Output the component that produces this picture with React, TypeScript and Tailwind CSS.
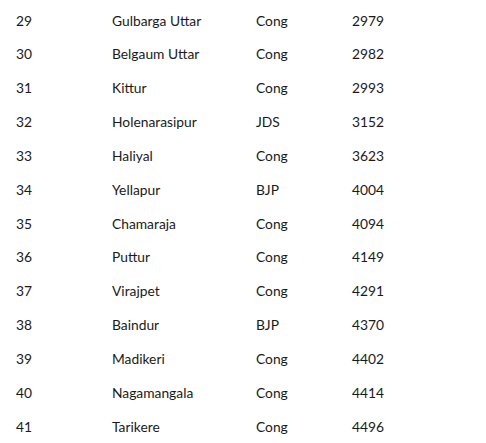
const rows: [string, string, string, string][] = [
  ['29', 'Gulbarga Uttar', 'Cong', '2979'],
  ['30', 'Belgaum Uttar', 'Cong', '2982'],
  ['31', 'Kittur', 'Cong', '2993'],
  ['32', 'Holenarasipur', 'JDS', '3152'],
  ['33', 'Haliyal', 'Cong', '3623'],
  ['34', 'Yellapur', 'BJP', '4004'],
  ['35', 'Chamaraja', 'Cong', '4094'],
  ['36', 'Puttur', 'Cong', '4149'],
  ['37', 'Virajpet', 'Cong', '4291'],
  ['38', 'Baindur', 'BJP', '4370'],
  ['39', 'Madikeri', 'Cong', '4402'],
  ['40', 'Nagamangala', 'Cong', '4414'],
  ['41', 'Tarikere', 'Cong', '4496'],
]

export default function App() {
  return (
    <div className="h-[443px] w-[486px] overflow-hidden bg-white pt-[4px] font-['Lato',sans-serif] text-[13.8px] text-[#1a1a1a]">
      {rows.map(([n, name, party, votes]) => (
        <div key={n} className="flex h-[33.85px] items-center pl-4">
          <span className="w-24">{n}</span>
          <span className="w-36">{name}</span>
          <span className="w-24">{party}</span>
          <span>{votes}</span>
        </div>
      ))}
    </div>
  )
}
